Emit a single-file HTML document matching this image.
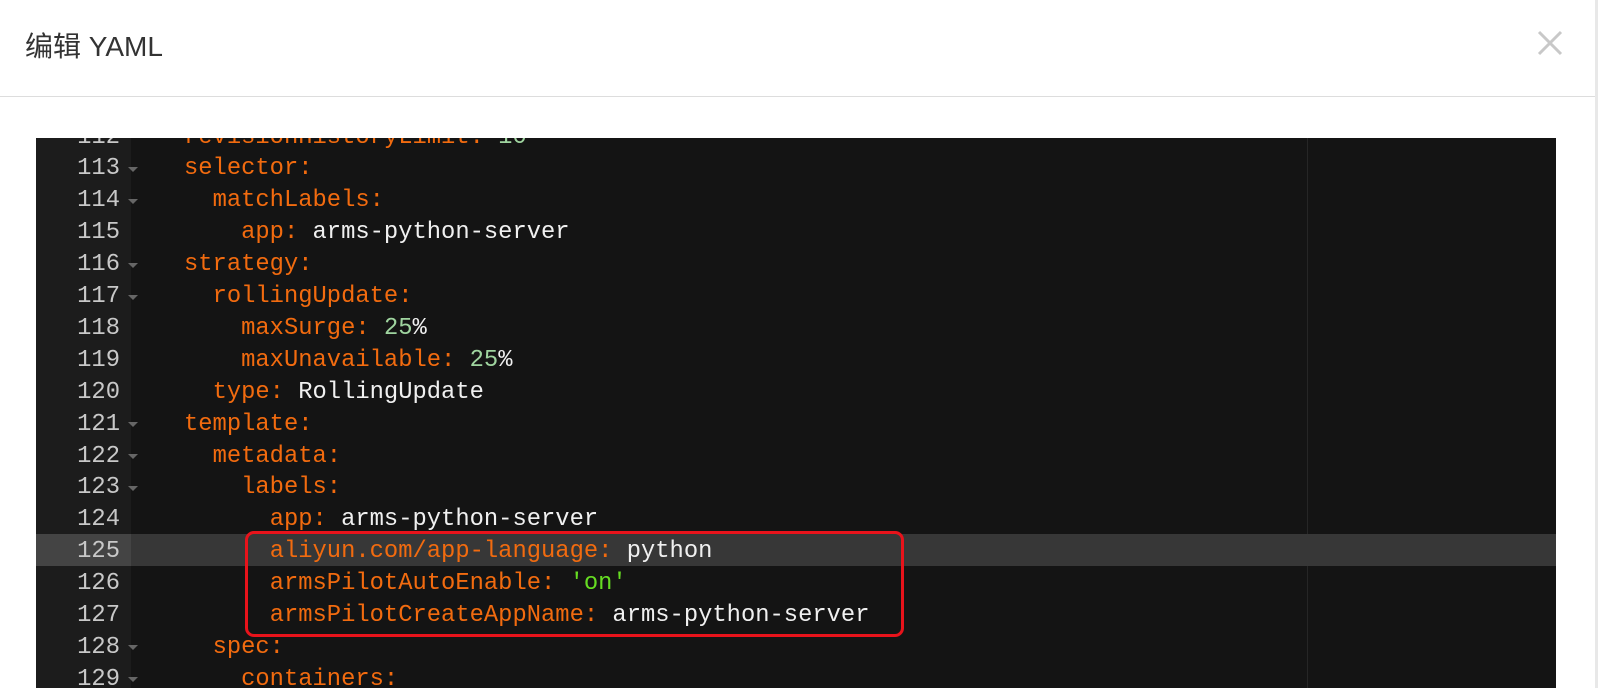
<!DOCTYPE html>
<html><head><meta charset="utf-8"><style>
*{margin:0;padding:0;box-sizing:border-box}
body{width:1598px;height:688px;overflow:hidden;background:#fff;position:relative;font-family:"Liberation Sans","Noto Sans CJK SC",sans-serif}
.title{position:absolute;left:25px;top:25px;font-size:28px;color:#333}
.hr{position:absolute;left:0;top:96px;width:1598px;height:1px;background:#ddd}
.vr{position:absolute;right:0;top:0;width:3px;height:688px;background:#e8e8e8}
.x{position:absolute;left:1536px;top:29px}
.ed{position:absolute;left:36px;top:138px;width:1520px;height:550px;background:#141414;overflow:hidden}
.gut{position:absolute;left:0;top:0;width:95px;height:100%;background:#1c1c1c}
.pm{position:absolute;left:1271px;top:0;width:1px;height:100%;background:#262626}
.hl{position:absolute;left:0;width:100%;height:31.9px;background:#373737}
.ghl{position:absolute;left:0;width:95px;height:31.9px;background:#444}
.ln{position:absolute;left:0;width:84px;text-align:right;color:#c8c8c8;font:23.8px/31.9px "Liberation Mono",monospace}
.ar{position:absolute;left:92px;width:0;height:0;border-left:5px solid transparent;border-right:5px solid transparent;border-top:5px solid #666}
.code{position:absolute;left:148px;white-space:pre;font:23.8px/31.9px "Liberation Mono",monospace;color:#f0f0f0}
.k{color:#f26b0f}.n{color:#9fd49f}.s{color:#66dd22}
.box{position:absolute;left:245px;top:531px;width:659px;height:106px;border:3px solid #e8131b;border-radius:9px}
</style></head><body>
<div class="title">编辑 YAML</div>
<svg class="x" width="28" height="28" viewBox="0 0 28 28"><path d="M3 3L25 25M25 3L3 25" stroke="#c8c8c8" stroke-width="3"/></svg>
<div class="hr"></div><div class="vr"></div>
<div class="ed">
<div class="gut"></div>
<div class="pm"></div>
<div class="hl" style="top:396px"></div>
<div class="ghl" style="top:396px"></div>
<div id="lines"></div>
</div>
<div class="box"></div>
<script>
var L=[
[112,0,'<span class="k">revisionHistoryLimit:</span> <span class="n">10</span>'],
[113,1,'<span class="k">selector:</span>'],
[114,1,'  <span class="k">matchLabels:</span>'],
[115,0,'    <span class="k">app:</span> arms-python-server'],
[116,1,'<span class="k">strategy:</span>'],
[117,1,'  <span class="k">rollingUpdate:</span>'],
[118,0,'    <span class="k">maxSurge:</span> <span class="n">25</span>%'],
[119,0,'    <span class="k">maxUnavailable:</span> <span class="n">25</span>%'],
[120,0,'  <span class="k">type:</span> RollingUpdate'],
[121,1,'<span class="k">template:</span>'],
[122,1,'  <span class="k">metadata:</span>'],
[123,1,'    <span class="k">labels:</span>'],
[124,0,'      <span class="k">app:</span> arms-python-server'],
[125,0,'      <span class="k">aliyun.com/app-language:</span> python'],
[126,0,'      <span class="k">armsPilotAutoEnable:</span> <span class="s">\'on\'</span>'],
[127,0,'      <span class="k">armsPilotCreateAppName:</span> arms-python-server'],
[128,1,'  <span class="k">spec:</span>'],
[129,1,'    <span class="k">containers:</span>']];
var h='';
L.forEach(function(l,i){var t=-16.5+i*31.9;
h+='<div class="ln" style="top:'+t+'px">'+l[0]+'</div>';
if(l[1])h+='<div class="ar" style="top:'+(t+13.5)+'px"></div>';
h+='<div class="code" style="top:'+t+'px">'+l[2]+'</div>';});
document.getElementById('lines').innerHTML=h;
</script>
</body></html>
